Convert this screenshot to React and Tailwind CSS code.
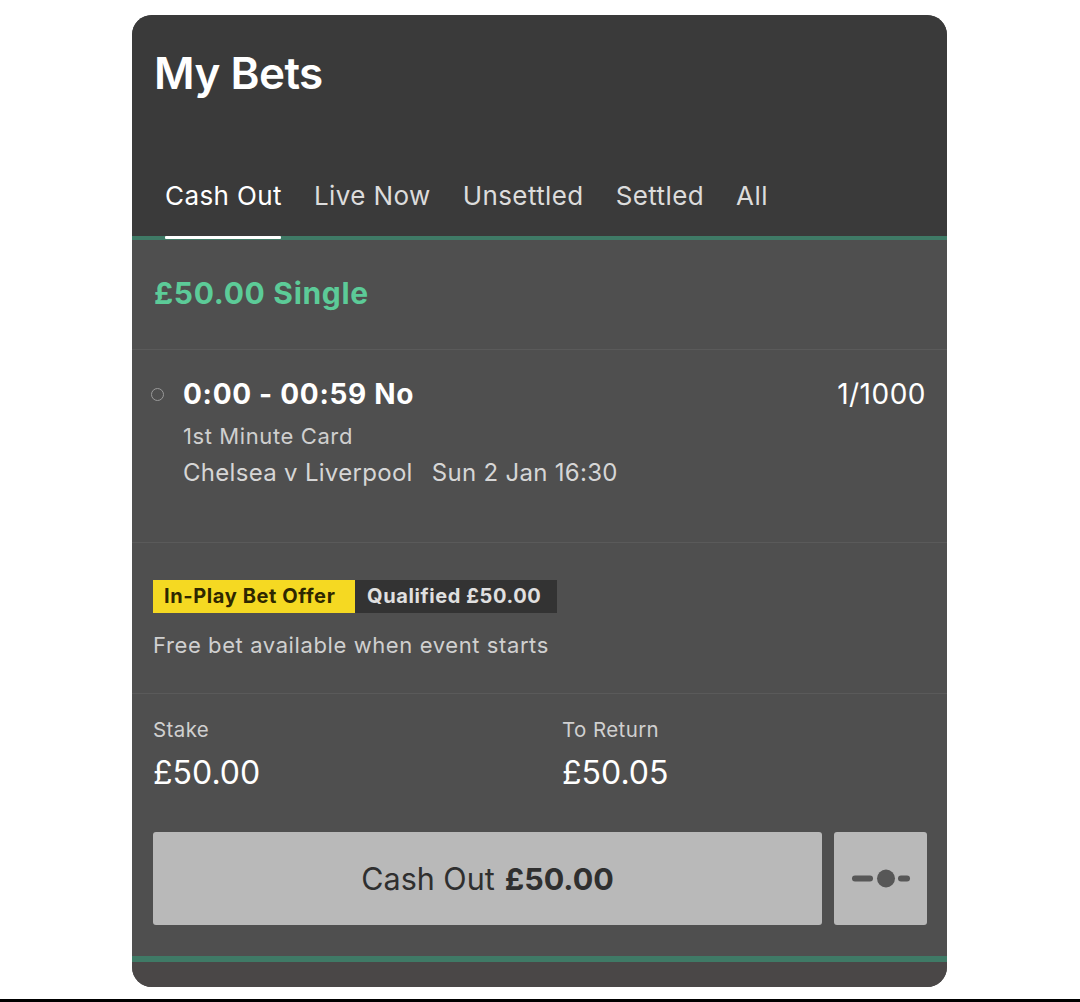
export default function App() {
  const font = { fontFamily: 'Inter, "Liberation Sans", Arial, sans-serif' };
  return (
    <div className="w-[1080px] h-[1002px] bg-white flex flex-col" style={font}>
      <div className="flex-1 pt-[15px] pl-[132px]">
        <div className="w-[815px] h-[972px] rounded-[20px] overflow-hidden bg-[#4f4f4f] flex flex-col">
          {/* Header */}
          <div className="h-[225px] bg-[#3a3a3a] flex flex-col">
            <div className="h-[116px] pl-[22px] pt-[34px]">
              <h1 className="text-[44px] leading-[48px] font-semibold text-white tracking-[-0.5px]">My Bets</h1>
            </div>
            <div className="flex items-end h-[105px] pl-[33px] gap-[32px] text-[26px] tracking-[0.4px] text-[#dcdcdc]">
              <span className="text-white leading-[40px] pb-[20px]">Cash Out</span>
              <span className="leading-[40px] pb-[20px]">Live Now</span>
              <span className="leading-[40px] pb-[20px]">Unsettled</span>
              <span className="leading-[40px] pb-[20px]">Settled</span>
              <span className="leading-[40px] pb-[20px]">All</span>
            </div>
            <div className="h-[4px] bg-[#3f7a66] relative">
              <div className="absolute left-[33px] top-[0px] w-[116px] h-[3px] bg-white rounded-[1px]" />
            </div>
          </div>
          {/* Single */}
          <div className="h-[110px] flex items-center pl-[22px] border-b border-[#5a5a5a]">
            <span className="text-[30px] font-bold tracking-[0.7px] text-[#5ccb98] -mt-[2px]">£50.00 Single</span>
          </div>
          {/* Bet row */}
          <div className="h-[193px] border-b border-[#5a5a5a] pt-[26px] pl-[19px] pr-[21px] flex">
            <div className="w-[13px] h-[13px] mt-[12px] rounded-full border-[1.5px] border-[#9a9a9a]" />
            <div className="ml-[19px] flex-1 flex flex-col">
              <span className="text-[28px] font-bold tracking-[0.7px] text-white leading-[36px]">0:00 - 00:59 No</span>
              <span className="text-[22px] tracking-[0.6px] text-[#cfcfcf] leading-[26px] mt-[11px]">1st Minute Card</span>
              <span className="text-[24px] tracking-[0.3px] text-[#d6d6d6] leading-[30px] mt-[9px]">
                Chelsea v Liverpool<span className="ml-[19px]">Sun 2 Jan 16:30</span>
              </span>
            </div>
            <span className="text-[28px] tracking-[0.5px] text-white leading-[36px]">1/1000</span>
          </div>
          {/* Offer */}
          <div className="h-[151px] border-b border-[#5a5a5a] pl-[21px] pt-[37px] flex flex-col">
            <div className="flex h-[33px]">
              <span className="bg-[#f5d922] text-[#2e2700] text-[20px] tracking-[0.6px] font-bold leading-[33px] px-[11px] w-[202px]">In-Play Bet Offer</span>
              <span className="bg-[#333333] text-[#e0e0e0] text-[20px] tracking-[0.6px] font-bold leading-[33px] px-[12px] w-[202px]">Qualified £50.00</span>
            </div>
            <span className="text-[22px] tracking-[0.6px] text-[#d0d0d0] leading-[26px] mt-[19px]">Free bet available when event starts</span>
          </div>
          {/* Stake */}
          <div className="h-[262px] pl-[21px] pr-[20px] pt-[24px] flex flex-col">
            <div className="flex">
              <div className="w-[409px] flex flex-col">
                <span className="text-[20.5px] tracking-[0.4px] text-[#d0d0d0] leading-[24px]">Stake</span>
                <span className="text-[32px] text-white leading-[36px] mt-[13px]">£50.00</span>
              </div>
              <div className="flex flex-col">
                <span className="text-[20.5px] tracking-[0.4px] text-[#d0d0d0] leading-[24px]">To Return</span>
                <span className="text-[32px] text-white leading-[36px] mt-[13px]">£50.05</span>
              </div>
            </div>
            <div className="flex mt-[41px] gap-[12px]">
              <div className="w-[669px] h-[93px] bg-[#b9b9b9] rounded-[3px] flex items-center justify-center text-[30.5px] text-[#2f2f2f]">
                <span>Cash Out</span>
                <span className="font-bold ml-[10px]">£50.00</span>
              </div>
              <div className="w-[93px] h-[93px] bg-[#b9b9b9] rounded-[3px] flex items-center justify-center">
                <svg width="93" height="93" viewBox="0 0 93 93">
                  <line x1="21" y1="46.5" x2="36" y2="46.5" stroke="#575757" strokeWidth="6" strokeLinecap="round" />
                  <circle cx="52" cy="46.5" r="9" fill="#575757" />
                  <line x1="67" y1="46.5" x2="73" y2="46.5" stroke="#575757" strokeWidth="6" strokeLinecap="round" />
                </svg>
              </div>
            </div>
          </div>
          <div className="h-[6px] bg-[#3f7a66]" />
          <div className="flex-1 bg-[#4a4747]" />
        </div>
      </div>
      <div className="h-[3px] bg-black" />
    </div>
  );
}
